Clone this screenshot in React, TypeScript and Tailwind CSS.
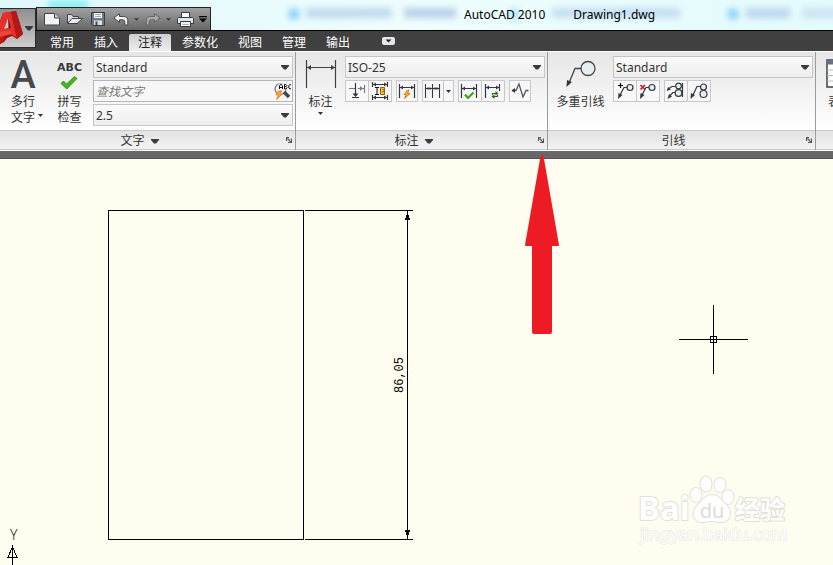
import { useState } from 'react';
import type { ReactNode } from 'react';

const tabs = ['常用', '插入', '注释', '参数化', '视图', '管理', '输出'];

function Caret({ className = '' }: { className?: string }) {
  return (
    <svg className={className} width="8" height="5" viewBox="0 0 8 5" aria-hidden="true">
      <path d="M0 0h8v1L5 4.500H3L0 1z" fill="currentColor" />
    </svg>
  );
}

function SmallCaret({ className = '' }: { className?: string }) {
  return (
    <svg className={className} width="5" height="3" viewBox="0 0 5 3" aria-hidden="true">
      <path d="M0 0h5L2.500 3z" fill="currentColor" />
    </svg>
  );
}

function StyleSelect({ label, value }: { label: string; value: string }) {
  return (
    <div className="relative h-[22px]">
      <select
        aria-label={label}
        defaultValue={value}
        className="block h-full w-full appearance-none border border-[#c6c6c8] bg-linear-to-b from-[#fbfbfb] to-[#ededed] px-0.5 pt-0.5 text-xs text-[#333]"
      >
        <option>{value}</option>
      </select>
      <Caret className="pointer-events-none absolute top-[9px] right-1 text-[#3c3c3c]" />
    </div>
  );
}

function ButtonGroup({ children }: { children: ReactNode }) {
  return (
    <div className="flex h-[22px] divide-x divide-[#c8c8ca] border border-[#c8c8ca] bg-[#f7f7f7]">{children}</div>
  );
}

function IconButton({ label, children }: { label: string; children: ReactNode }) {
  return (
    <button type="button" aria-label={label} className="flex items-center justify-center hover:bg-amber-100">
      <svg width="22" height="20" viewBox="0 0 22 20" fill="none" stroke="#333840" strokeWidth="1.200">
        {children}
      </svg>
    </button>
  );
}

function Panel({
  title,
  width,
  expandable = false,
  children,
}: {
  title: string;
  width: string;
  expandable?: boolean;
  children: ReactNode;
}) {
  return (
    <section className={`flex shrink-0 flex-col border-r border-[#9b9b9b] ${width}`}>
      <div className="flex h-[78px] bg-linear-to-b from-[#e6e6e6] to-white pt-1 pr-0.5">{children}</div>
      <div className="flex h-5 items-center border-y border-[#c9c9c9] bg-linear-to-b from-[#e2e2e2] to-[#f3f3f3]">
        <h2 className="flex flex-1 items-center justify-center gap-1.5 pt-0.5">
          {title}
          {expandable && <Caret className="text-[#3c3c3c]" />}
        </h2>
        <button type="button" aria-label={`${title}设置`} className="flex w-4 items-center justify-end pr-[3px]">
          <svg width="6" height="6" viewBox="0 0 6 6" stroke="#555560" strokeWidth="1.200" fill="none">
            <path d="M.5 4V.5H3M1.500 1.500 5 5M5.400 1.500v4H2" />
          </svg>
        </button>
      </div>
    </section>
  );
}

function AppLogo() {
  return (
    <svg width="24" height="34" viewBox="0 0 24 34" aria-hidden="true">
      <path d="M3 2 16 0 23 23 17 28 12 25 7 27 4 31 0 33V10z" fill="#9c100e" />
      <path d="M3 2 11 1 17 27 12 24 10 19 5 20 2 29 0 30V11z" fill="#e8302a" />
      <path d="M11 1 16 0 23 23 17 28z" fill="#b51714" />
      <path d="M8 7 11 17 4 18z" fill="#74100f" />
      <path d="M8 7 8.500 17 4 18z" fill="#c9c9c9" />
      <path d="M0 21 10 19 12 23 0 26z" fill="#f0443c" />
      <path d="M0 26 5 25 3 31 0 33z" fill="#c11b17" />
    </svg>
  );
}

function QuickAccess() {
  return (
    <div className="flex h-[23px] w-[175px] items-center border border-b-0 border-[#222] bg-linear-to-b from-[#a2a2a2] to-[#666] pl-[7px]">
      <button type="button" aria-label="新建" className="w-[23px]">
        <svg width="16" height="14" viewBox="0 0 16 14">
          <path d="M.5 1.500h10l5 4.500v7H.5z" fill="#f3f3f3" stroke="#3f444c" />
          <path d="M10.500 1.500v4.500h5" fill="#cfd3d8" stroke="#3f444c" />
        </svg>
      </button>
      <button type="button" aria-label="打开" className="w-6">
        <svg width="16" height="14" viewBox="0 0 16 14" stroke="#3f444c" strokeLinejoin="round">
          <path d="M.5 11.500v-9h4l1.500 2h5.500v2" fill="#d8dbdf" />
          <path d="M.5 11.500 5 6.500h10.500L10 11.500z" fill="#eceef0" />
        </svg>
      </button>
      <button type="button" aria-label="保存" className="w-[22px]">
        <svg width="14" height="14" viewBox="0 0 14 14">
          <path d="M.5.5h13v13H2L.5 12z" fill="#6e7a88" stroke="#343a44" />
          <path d="M3 1h8v5H3z" fill="#f2f2f2" />
          <path d="M4 2.500h6M4 4.500h6" stroke="#a5abb3" />
          <path d="M3 8.500h8V13H3z" fill="#dce0e4" />
          <path d="M4.500 9.500h2V13h-2z" fill="#414852" />
        </svg>
      </button>
      <button type="button" aria-label="放弃" className="w-[21px]">
        <svg width="16" height="13" viewBox="0 0 16 13">
          <path d="M6.500.7.8 5l5.700 4.300V6.800h3.300q2 0 2 2v3.200h3V7.800q0-4.300-4.300-4.300h-4z" fill="#f4f4f4" stroke="#414852" />
        </svg>
      </button>
      <SmallCaret className="mr-1.5 text-[#444]" />
      <button type="button" aria-label="重做" className="w-[21px]">
        <svg width="16" height="13" viewBox="0 0 16 13">
          <path d="M9.500.7 15.200 5 9.500 9.300V6.800H6.200q-2 0-2 2v3.200h-3V7.800q0-4.300 4.300-4.300h4z" fill="#a9a9a9" stroke="#626262" />
        </svg>
      </button>
      <SmallCaret className="mr-1.5 text-[#444]" />
      <button type="button" aria-label="打印" className="w-[22px]">
        <svg width="17" height="15" viewBox="0 0 17 15" stroke="#343a44">
          <path d="M4.500.5h8v5h-8z" fill="#fff" />
          <path d="M1.500 5.500h14l1 1v5H.5v-5z" fill="#e3e5e8" />
          <path d="M3.500 9.500h10v5h-10z" fill="#fff" />
          <path d="M5 12.500h7" stroke="#aab0b8" />
        </svg>
      </button>
      <button type="button" aria-label="自定义快速访问工具栏" className="text-black">
        <svg width="8" height="7" viewBox="0 0 8 7">
          <path d="M0 0h8v1.200H0zM0 2.500h8L4 6.500z" fill="currentColor" />
        </svg>
      </button>
    </div>
  );
}

function TitleBar() {
  return (
    <div className="relative flex h-[31px] items-end overflow-hidden border-b border-black bg-linear-to-r from-[#dff8fb] via-[#eefdfd] to-[#e2fbfb] pl-9">
      <div className="absolute inset-0 blur-[3px]" aria-hidden="true">
        <div className="absolute top-0 left-12 h-3 w-10 bg-[#8ff0f3]" />
        <div className="absolute top-2 left-[288px] size-3 rounded-full bg-[#8fd0f5]" />
        <div className="absolute top-2 left-[306px] h-2.5 w-[86px] bg-[#c0daee]" />
        <div className="absolute top-2 left-[404px] h-2.5 w-[52px] bg-[#b9d0e9]" />
        <div className="absolute top-2 left-[508px] size-3 rounded-full bg-[#b4e4f8]" />
        <div className="absolute top-2 left-[552px] h-2.5 w-32 bg-[#c5def3]" />
        <div className="absolute top-2 left-[727px] size-3 rounded-full bg-[#8fd4f8]" />
        <div className="absolute top-2 left-[746px] h-2.5 w-11 bg-[#bcd6ee]" />
        <div className="absolute top-2 left-[802px] h-2.5 w-10 bg-[#cde3f3]" />
      </div>
      <div className="relative">
        <QuickAccess />
      </div>
      <h1 className="relative ml-[253px] flex gap-7 self-center text-xs text-black">
        <span>AutoCAD 2010</span>
        <span>Drawing1.dwg</span>
      </h1>
    </div>
  );
}

function TextPanel() {
  return (
    <Panel title="文字" width="w-[296px]" expandable>
      <button type="button" className="flex w-[46px] flex-col items-center leading-4">
        <span className="flex h-[38px] items-center font-['Roboto'] text-[38px] font-medium text-[#45484d]">A</span>
        <span>多行</span>
        <span className="relative">
          文字
          <SmallCaret className="absolute top-1 -right-2" />
        </span>
      </button>
      <button type="button" className="flex w-[47px] flex-col items-center leading-4">
        <span className="flex h-[38px] flex-col items-center pt-1">
          <span className="font-['DejaVu_Sans'] text-[11px] leading-4 font-bold text-[#3a3a3a]">ABC</span>
          <svg width="18" height="14" viewBox="0 0 18 14">
            <path d="M1 7.500 3.500 5 6.500 8 14.500.5 17 2.500 6.800 13z" fill="#43b81d" stroke="#2b8310" strokeWidth=".8" />
          </svg>
        </span>
        <span>拼写</span>
        <span>检查</span>
      </button>
      <div className="flex flex-1 flex-col gap-0.5">
        <StyleSelect label="文字样式" value="Standard" />
        <div className="flex h-[22px] items-center border border-[#b4b5bf] bg-[#f7f7f7]">
          <input
            type="text"
            aria-label="查找文字"
            placeholder="查找文字"
            className="min-w-0 flex-1 px-0.5 pt-0.5 text-xs italic outline-none placeholder:text-[#777]"
          />
          <button type="button" aria-label="查找">
            <svg width="18" height="18" viewBox="0 0 18 18" fill="none">
              <circle cx="6.500" cy="7" r="5.500" fill="#eef1f3" stroke="#6c7278" strokeWidth="1.200" />
              <path d="m10 10 5 5" stroke="#44484d" strokeWidth="3.500" />
              <path d="M4.500 9 2 13h2.500L2.500 17.500 8 12H5.500L8 9z" fill="#ffb52c" stroke="#d9730d" strokeWidth=".8" />
              <path d="M5 1.500h12.500v6H5z" fill="#f7f7f7" />
              <path
                d="M5.500 7V4l1-1.500h1l1 1.500v3M5.500 5.500h3M10.500 7V2.500h1.500l.8 1-.8 1h-1.500M12 4.500l1 1-1 1.500h-1.500M17 3l-1-.5-1.200 1v2.500l1.200 1 1-.5"
                stroke="#111"
              />
            </svg>
          </button>
        </div>
        <StyleSelect label="文字高度" value="2.5" />
      </div>
    </Panel>
  );
}

function DimensionPanel() {
  return (
    <Panel title="标注" width="w-[252px]" expandable>
      <button type="button" className="flex w-[49px] flex-col items-center leading-4">
        <svg width="32" height="38" viewBox="0 0 32 38" fill="none" stroke="#3d4148" strokeWidth="1.200">
          <path d="M1.500 4v28M30.500 4v28M2 11.500h28" />
          <path d="M2 11.500 6 9v5zM30 11.500l-4-2.500v5z" fill="#3d4148" stroke="none" />
        </svg>
        <span>标注</span>
        <SmallCaret className="mt-0.5" />
      </button>
      <div className="flex flex-1 flex-col gap-0.5">
        <StyleSelect label="标注样式" value="ISO-25" />
        <div className="flex gap-1">
          <ButtonGroup>
            <IconButton label="打断">
              <path d="M3 7.500h6M12 7.500h6M18.500 4v8" stroke="#777c82" />
              <path d="m14 5 3 2.500-3 2.500z" fill="#777c82" stroke="none" />
              <path d="M9.500 2v13M6 16.500h7" />
              <path d="M6.500 12.500h6L9.500 16z" fill="#333840" stroke="none" />
            </IconButton>
            <IconButton label="调整间距">
              <path d="M3.500 1v5M18.500 1v5M4 3.500h14M3.500 14v5M18.500 14v5M4 16.500h14" />
              <path d="m4 3.500 3-2v4zM18 3.500l-3-2v4zM4 16.500l3-2v4zM18 16.500l-3-2v4z" fill="#333840" stroke="none" />
              <path d="M6 6.500h4M6 13.500h4M8 6.500v7" stroke="#111" strokeWidth="1" />
              <path d="M11.500 6.500h4v7h-4z" fill="#f5c02c" stroke="#8c6310" strokeWidth="1" />
              <path d="M13.500 8.500h2M13.500 10.500h2" stroke="#8c6310" strokeWidth="1" />
            </IconButton>
          </ButtonGroup>
          <ButtonGroup>
            <button type="button" aria-label="快速标注">
              <svg width="20" height="20" viewBox="0 0 20 20" fill="none" stroke="#333840" strokeWidth="1.200">
                <path d="M2.500 3v14M17.500 3v14M3 6.500h14" />
                <path d="m3 6.500 3-2v4zM17 6.500l-3-2v4z" fill="#333840" stroke="none" />
                <path d="m11 9-4 4.500h2.500L7.500 17.500l5.500-5h-2.500l1.500-3.500z" fill="#ffc13a" stroke="#d26a0a" strokeWidth=".9" />
              </svg>
            </button>
          </ButtonGroup>
          <ButtonGroup>
            <button type="button" aria-label="连续">
              <svg width="20" height="20" viewBox="0 0 20 20" fill="none" stroke="#333840" strokeWidth="1.100">
                <path d="M2.500 3v14M9.500 3v14M16.500 3v14M3 7.500h13" />
                <path d="m3 7.500 2.500-1.500v3zM9 7.500 6.500 6v3zM10 7.500 12.500 6v3zM16 7.500 13.500 6v3z" fill="#333840" stroke="none" />
              </svg>
            </button>
            <button type="button" aria-label="更多标注" className="flex w-[9px] items-center justify-center">
              <SmallCaret />
            </button>
          </ButtonGroup>
          <ButtonGroup>
            <IconButton label="检验">
              <path d="M2.500 3v14M17.500 3v14M3 7.500h14" />
              <path d="m3 7.500 3-2v4zM17 7.500l-3-2v4z" fill="#333840" stroke="none" />
              <path d="m6 13.500 3 3.500 5.500-5.500" stroke="#3aa519" strokeWidth="2.200" />
            </IconButton>
            <IconButton label="更新">
              <path d="M3.500 3v14M17.500 3v7M4 6.500h13" />
              <path d="m4 6.500 3-2v4zM17 6.500l-3-2v4z" fill="#333840" stroke="none" />
              <path d="M10.500 14v-1.500h4M15.500 14v1.500h-4" stroke="#286318" />
              <path d="m13.500 10 3 2.500-3 2zM12.500 13.500l-3 2 3 2.500z" fill="#286318" stroke="none" />
            </IconButton>
          </ButtonGroup>
          <ButtonGroup>
            <button type="button" aria-label="折弯标注">
              <svg width="20" height="20" viewBox="0 0 20 20" fill="none" stroke="#50555c" strokeWidth="1.300">
                <path d="M2 9.500h4L9 3l4 13 3-6.500h2.500" />
                <path d="m1.500 9.500 3.500-2.500v5z" fill="#333840" stroke="none" />
              </svg>
            </button>
          </ButtonGroup>
        </div>
      </div>
    </Panel>
  );
}

function LeaderPanel() {
  return (
    <Panel title="引线" width="w-[268px]">
      <button type="button" className="flex w-[65px] flex-col items-center leading-4">
        <svg width="32" height="38" viewBox="0 0 32 38" fill="none" stroke="#41454c" strokeWidth="1.300">
          <path d="M16 12.500h-6L4 27" />
          <path d="M1.500 31 2 24l5 2z" fill="#33373d" stroke="none" />
          <circle cx="23" cy="12.500" r="7" fill="#e8edf0" />
        </svg>
        <span>多重引线</span>
      </button>
      <div className="flex flex-1 flex-col gap-0.5">
        <StyleSelect label="多重引线样式" value="Standard" />
        <div className="flex gap-1">
          <ButtonGroup>
            <IconButton label="添加引线">
              <path d="M13 6.500h-3L6 14" />
              <path d="m4 18 .5-6 4 2z" fill="#333840" stroke="none" />
              <circle cx="16" cy="6.500" r="3" fill="#e8edf0" />
              <path d="M6.500 2v5M4 4.500h5" stroke="#000" />
            </IconButton>
            <IconButton label="删除引线">
              <path d="M12 6.500H9L5 14" />
              <path d="m3 18 .5-6 4 2z" fill="#333840" stroke="none" />
              <circle cx="15" cy="6.500" r="3" fill="#e8edf0" />
              <path d="m3.500 4 4.500 4.500M8 4 3.500 8.500" stroke="#cf1722" strokeWidth="1.700" />
            </IconButton>
          </ButtonGroup>
          <ButtonGroup>
            <IconButton label="对齐">
              <path d="M11 5.500H7l-3 2M11 11.500H8l-3 3M17.500 2v14" />
              <path d="m1.500 10 1.500-4 3 2.500zM2.500 18l1.500-5 3 2.500z" fill="#333840" stroke="none" />
              <circle cx="13.500" cy="5" r="2.800" fill="#e8edf0" />
              <circle cx="13.500" cy="12" r="3.300" fill="#e8edf0" />
            </IconButton>
            <IconButton label="合并">
              <path d="M12 5.500H9L5 14" />
              <path d="m2.500 18 .5-6 4 2z" fill="#333840" stroke="none" />
              <circle cx="15.500" cy="6" r="3" fill="#e8edf0" />
              <circle cx="15.500" cy="13" r="3.500" fill="#e8edf0" />
            </IconButton>
          </ButtonGroup>
        </div>
      </div>
    </Panel>
  );
}

function TablePanel() {
  return (
    <section className="flex min-w-0 flex-1 flex-col overflow-hidden">
      <div className="h-[78px] bg-linear-to-b from-[#e6e6e6] to-white pt-1 pl-2.5">
        <button type="button" className="flex w-9 flex-col items-start leading-4">
          <svg className="h-[38px] shrink-0" width="34" height="38" viewBox="0 0 34 38" fill="none">
            <path d="M1 4h32v27H1z" fill="#fff" stroke="#3a424c" strokeWidth="1.500" />
            <path d="M1 4h32v4.500H1z" fill="#66727e" />
            <path d="M1 14h32M1 19.500h32M1 25h32M17 8v23" stroke="#b5bbc2" />
          </svg>
          <span className="pl-0.5">表格</span>
        </button>
      </div>
      <div className="h-5 border-y border-[#c9c9c9] bg-linear-to-b from-[#e2e2e2] to-[#f3f3f3]" />
    </section>
  );
}

function Watermark() {
  return (
    <svg
      className="absolute right-11 bottom-4 font-['Noto_Sans','Noto_Sans_CJK_SC',sans-serif]"
      width="152"
      height="76"
      viewBox="0 0 152 76"
      fill="#fff"
      stroke="#e2e1d8"
      strokeWidth="2"
      strokeLinejoin="round"
      paintOrder="stroke"
    >
      <text x="1" y="47" fontSize="33" fontWeight="700">Bai</text>
      <ellipse cx="59" cy="22" rx="5.500" ry="7" />
      <ellipse cx="69" cy="11" rx="5.500" ry="7.500" />
      <ellipse cx="83" cy="12" rx="5.500" ry="7" />
      <ellipse cx="91" cy="24" rx="5.500" ry="7" />
      <path d="M75 22c7 0 10 6 15 11 6 7 3 16-6 16-4 0-5-1-9-1s-5 1-9 1c-10 0-12-9-6-16 5-5 8-11 15-11z" />
      <text x="75" y="45" fontSize="20" textAnchor="middle" fill="#dddcd3" stroke="none">du</text>
      <text x="98" y="46" fontSize="25" fontWeight="700">经验</text>
      <text x="3" y="67" fontSize="17" strokeWidth="1">jingyan.baidu.com</text>
    </svg>
  );
}

function DrawingArea() {
  return (
    <main className="relative min-h-[400px] flex-1 bg-[#fffcf0]">
      <svg className="absolute inset-0 h-full w-full overflow-visible" fill="none" stroke="#000" aria-label="Drawing1">
        <g shapeRendering="crispEdges">
          <rect x="108.500" y="51.500" width="195" height="329" />
          <path d="M305 51.500h108M305 380.500h108M407.500 51.500v329" />
          <path d="M407.500 52l2.500 9h-5zM407.500 380l2.500-9h-5z" fill="#000" stroke="none" />
          <path d="M679 180.500h69M713.500 146v69M710.500 177.500h6v6h-6z" />
          <path d="M12.500 387.500 17 398.500H8zM12.500 388v18" />
        </g>
        <text x="0" y="0" transform="translate(403 234) rotate(-90)" fontSize="12" fill="#000" stroke="none" className="font-['Liberation_Mono',monospace]">
          86,05
        </text>
        <text x="10" y="381" fontSize="14" fontWeight="300" fill="#000" stroke="none" className="font-['Open_Sans',sans-serif]">
          Y
        </text>
        <path
          d="M540 0q2-9 4 0l15 86q0 1-1 1h-6v86q0 2-2 2h-16q-2 0-2-2V87h-6q-1 0-1-1z"
          fill="#ed1c24"
          stroke="none"
        />
      </svg>
      <Watermark />
    </main>
  );
}

export default function App() {
  const [active, setActive] = useState('注释');

  return (
    <div className="flex min-h-screen flex-col overflow-hidden bg-[#fffcf0] font-['Noto_Sans','Noto_Sans_CJK_SC',sans-serif] text-xs text-[#333]">
      <header className="relative">
        <TitleBar />
        <nav className="flex h-5 items-end bg-[#404040] pl-10">
          {tabs.map((tab) => (
            <button
              key={tab}
              type="button"
              onClick={() => setActive(tab)}
              className={`mx-px h-[17px] px-[9px] leading-4 ${
                tab === active ? 'rounded-t-xs bg-linear-to-b from-[#cfcfcf] to-[#efefef] text-[#222]' : 'text-white'
              }`}
            >
              {tab}
            </button>
          ))}
          <button type="button" aria-label="最小化功能区" className="ml-[22px] self-center">
            <svg width="13" height="8" viewBox="0 0 13 8">
              <rect width="13" height="8" rx="2" fill="#e3e6ec" />
              <path d="M3.500 2.500h6l-3 3z" fill="#222" />
            </svg>
          </button>
        </nav>
        <button
          type="button"
          aria-label="应用程序菜单"
          className="absolute top-2 left-0 flex h-10 w-9 items-center justify-between border border-l-0 border-[#2b2b2b] bg-linear-to-b from-[#8f8f8f] to-[#cdcdcd] pr-0.5"
        >
          <AppLogo />
          <Caret className="text-[#333a44]" />
        </button>
      </header>
      <div className="flex overflow-hidden border-y border-white bg-white">
        <TextPanel />
        <DimensionPanel />
        <LeaderPanel />
        <TablePanel />
      </div>
      <div className="h-2 border-b border-[#555] bg-[#686868]" />
      <DrawingArea />
    </div>
  );
}
